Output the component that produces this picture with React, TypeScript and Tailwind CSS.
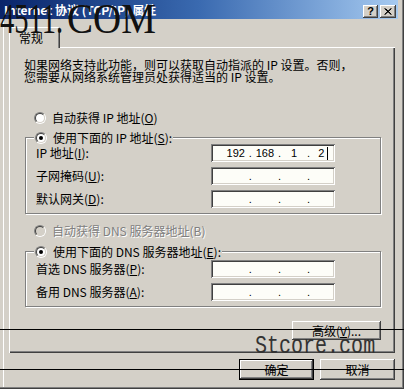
import { Fragment } from "react"
import type { ReactNode } from "react"

// classic win2k bevels
const raised =
  "shadow-[inset_-1px_-1px_#404040,inset_1px_1px_#ffffff,inset_-2px_-2px_#808080,inset_2px_2px_#d4d0c8]"
const sunken =
  "shadow-[inset_1px_1px_#808080,inset_-1px_-1px_#ffffff,inset_2px_2px_#404040,inset_-2px_-2px_#d4d0c8]"

function Radio({ checked, disabled }: { checked?: boolean; disabled?: boolean }) {
  return (
    <span className="flex h-[12px] w-[12px] shrink-0 rounded-full border border-t-[#808080] border-l-[#808080] border-r-white border-b-white">
      <span
        className={`flex flex-1 items-center justify-center rounded-full border border-t-[#404040] border-l-[#404040] border-r-[#d4d0c8] border-b-[#d4d0c8] ${
          disabled ? "bg-[#d4d0c8]" : "bg-white"
        }`}
      >
        {checked && <span className="h-[4px] w-[4px] rounded-full bg-black" />}
      </span>
    </span>
  )
}

function RadioRow({
  checked,
  disabled,
  children,
}: {
  checked?: boolean
  disabled?: boolean
  children: ReactNode
}) {
  return (
    <div className="flex h-[14px] items-center gap-[6px]">
      <Radio checked={checked} disabled={disabled} />
      <span
        className={`whitespace-nowrap ${
          disabled ? "text-[#808080] [text-shadow:1px_1px_#ffffff]" : ""
        }`}
      >
        {children}
      </span>
    </div>
  )
}

function IpField({ values, cursor }: { values?: string[]; cursor?: boolean }) {
  const segs = values ?? ["", "", "", ""]
  return (
    <div
      className={`flex h-[18px] w-[124px] shrink-0 items-center overflow-hidden bg-[#fdfdf8] pl-[13px] font-['Liberation_Sans',sans-serif] text-[11px] ${sunken}`}
    >
      {segs.map((v, i) => (
        <Fragment key={i}>
          {i > 0 && <span className="w-[6px] text-center">.</span>}
          <span className="flex w-[25px] items-center justify-center">
            {v}
            {cursor && i === 3 && <span className="ml-[3px] h-[13px] w-px bg-black" />}
          </span>
        </Fragment>
      ))}
    </div>
  )
}

function FieldRow({ label, children }: { label: ReactNode; children: ReactNode }) {
  return (
    <div className="flex h-[18px] items-center">
      <span className="w-[175px] whitespace-nowrap">{label}</span>
      {children}
    </div>
  )
}

function GroupBox({ legend, children, className }: { legend: ReactNode; children: ReactNode; className: string }) {
  return (
    <div
      className={`relative ml-px flex flex-col border border-[#808080] pl-[10px] shadow-[1px_1px_#ffffff,inset_1px_1px_#ffffff] ${className}`}
    >
      <div className="absolute -top-[7px] left-[8px] bg-[#d4d0c8] px-px">{legend}</div>
      {children}
    </div>
  )
}

export default function App() {
  return (
    <div className="relative h-[389px] w-[404px] overflow-hidden bg-[#d4d0c8] font-['Noto_Sans_CJK_SC','Liberation_Sans',sans-serif] text-[12px] leading-[12px] text-black">
      <div className="flex h-full flex-col pr-[6px] shadow-[inset_-1px_-1px_#404040,inset_-2px_-2px_#808080,inset_3px_0_#d4d0c8,inset_4px_0_#ffffff]">
        {/* title bar */}
        <div className="flex h-[19px] items-center bg-gradient-to-r from-[#0a246a] via-[#3a6ab0] to-[#a6caf0] pl-[4px] pr-[2px]">
          <span className="whitespace-nowrap font-bold text-white">Internet 协议 (TCP/IP) 属性</span>
          <div className="ml-auto mt-[3px] flex gap-[2px]">
            <span
              className={`flex h-[13px] w-[15px] items-center justify-center bg-[#d4d0c8] font-['Liberation_Sans',sans-serif] text-[11px] font-bold ${raised}`}
            >
              ?
            </span>
            <span className={`flex h-[13px] w-[16px] items-center justify-center bg-[#d4d0c8] ${raised}`}>
              <svg width="8" height="7" viewBox="0 0 8 7">
                <path d="M0.5 0.5 L7 6.5 M1.5 0.5 L7.5 6.5 M7 0.5 L0.5 6.5 M7.5 0.5 L1 6.5" stroke="#000" strokeWidth="1" />
              </svg>
            </span>
          </div>
        </div>

        {/* tab + page */}
        <div className="flex flex-col pl-[9px] pt-[8px]">
          <div className="relative z-10 -mb-px flex h-[21px] w-[51px] items-center rounded-t-[2px] bg-[#d4d0c8] pl-[10px] shadow-[inset_1px_1px_#ffffff,inset_-1px_0_#404040,inset_-2px_0_#808080]">
            常规
          </div>
          <div className="flex h-[306px] w-[386px] flex-col pl-[15px] pr-[14px] pt-[12px] shadow-[inset_1px_1px_#ffffff,inset_-1px_-1px_#404040,inset_-2px_-2px_#808080]">
            <p className="whitespace-nowrap">
              如果网络支持此功能，则可以获取自动指派的 IP 设置。否则，
              <br />
              您需要从网络系统管理员处获得适当的 IP 设置。
            </p>

            <div className="ml-[10px] mt-[28px]">
              <RadioRow>
                自动获得 IP 地址(<u>O</u>)
              </RadioRow>
            </div>

            <GroupBox
              className="mt-[12px] gap-[5px] pb-[5px] pt-[6px]"
              legend={
                <RadioRow checked>
                  使用下面的 IP 地址(<u>S</u>):
                </RadioRow>
              }
            >
              <FieldRow label={<>IP 地址(<u>I</u>):</>}>
                <IpField values={["192", "168", "1", "2"]} cursor />
              </FieldRow>
              <FieldRow label={<>子网掩码(<u>U</u>):</>}>
                <IpField />
              </FieldRow>
              <FieldRow label={<>默认网关(<u>D</u>):</>}>
                <IpField />
              </FieldRow>
            </GroupBox>

            <div className="ml-[10px] mt-[10px]">
              <RadioRow disabled>自动获得 DNS 服务器地址(B)</RadioRow>
            </div>

            <GroupBox
              className="mt-[13px] gap-[5px] pb-[5px] pt-[8px]"
              legend={
                <RadioRow checked>
                  使用下面的 DNS 服务器地址(<u>E</u>):
                </RadioRow>
              }
            >
              <FieldRow label={<>首选 DNS 服务器(<u>P</u>):</>}>
                <IpField />
              </FieldRow>
              <FieldRow label={<>备用 DNS 服务器(<u>A</u>):</>}>
                <IpField />
              </FieldRow>
            </GroupBox>

            <div className="mt-[14px] flex justify-end">
              <span className={`flex h-[19px] w-[89px] items-center justify-center bg-[#d4d0c8] ${raised}`}>
                高级(<u>V</u>)...
              </span>
            </div>
          </div>
        </div>

        {/* dialog buttons */}
        <div className="mt-[6px] flex justify-end gap-[6px] pr-[3px]">
          <span className="flex h-[21px] w-[75px] items-center justify-center bg-[#d4d0c8] shadow-[inset_0_0_0_1px_#000000,inset_-2px_-2px_#404040,inset_2px_2px_#ffffff,inset_-3px_-3px_#808080]">
            确定
          </span>
          <span className={`flex h-[21px] w-[75px] items-center justify-center bg-[#d4d0c8] ${raised}`}>取消</span>
        </div>
      </div>

      {/* scan artefacts + watermarks over the capture */}
      <div className="pointer-events-none absolute left-0 top-[329px] h-px w-full bg-black" />
      <div className="pointer-events-none absolute left-0 top-[369px] h-px w-full bg-black" />
      <div className="pointer-events-none absolute left-0 top-0 z-20 flex font-['Liberation_Serif',serif] text-[42px] leading-[42px] text-[#111111]">
        <span className="-mt-[2px] w-[67px] whitespace-nowrap [transform-origin:0_0] [transform:scaleX(0.68)]">
          4511.
        </span>
        <span className="-mt-[2px] whitespace-nowrap [transform-origin:0_0] [transform:scaleX(0.93)]">COM</span>
      </div>
      <div className="pointer-events-none absolute left-[255px] top-[333px] z-20">
        <span className="inline-block whitespace-nowrap font-['Liberation_Mono',monospace] text-[26px] leading-[26px] text-[#333333] [transform-origin:0_0] [transform:scaleX(0.77)]">
          Stcore.com
        </span>
      </div>
    </div>
  )
}
